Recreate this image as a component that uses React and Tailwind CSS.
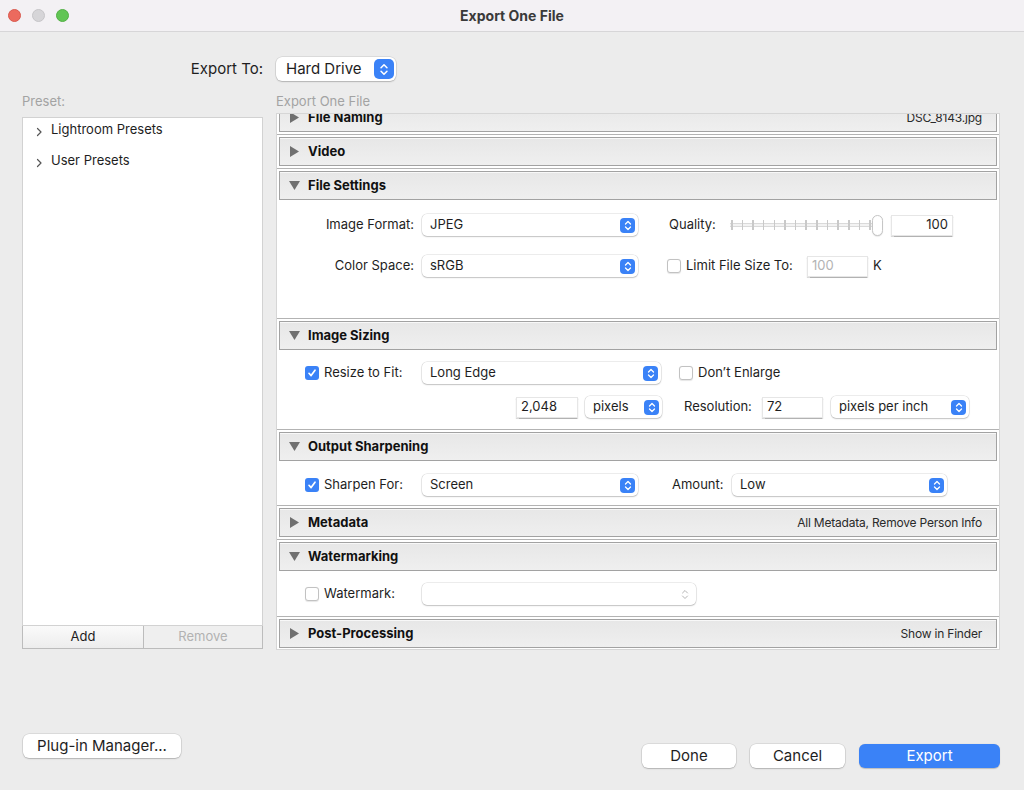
import React from 'react';

function Stepper({ big }) {
    return (
        <div className={big ? "w-[20px] h-[20px] rounded-[5px] bg-[#3a82f7] flex items-center justify-center" : "w-[15px] h-[15px] rounded-[4px] bg-[#3a82f7] flex items-center justify-center"}>
            <svg width={big ? 10 : 8} height={big ? 13 : 11} viewBox="0 0 8 11">
                <path d="M1.5 4 L4 1.5 L6.5 4 M1.5 7 L4 9.5 L6.5 7" stroke="white" strokeWidth="1.3" fill="none" strokeLinecap="round" strokeLinejoin="round" />
            </svg>
        </div>
    );
}

function Select({ className, value, disabled }) {
    return (
        <div className={`flex items-center h-[22px] rounded-[5px] bg-white shadow-[0_0_0_0.5px_rgba(0,0,0,0.14),0_1px_1.5px_rgba(0,0,0,0.18)] pl-[8px] pr-[3px] ${className}`}>
            <span className="flex-1 text-[13px] text-[#1e1e1e] truncate">{value}</span>
            {disabled ? (
                <svg width="8" height="11" viewBox="0 0 8 11" className="mr-[4px]">
                    <path d="M1.5 4 L4 1.5 L6.5 4 M1.5 7 L4 9.5 L6.5 7" stroke="#b5b5b5" strokeWidth="1" fill="none" strokeLinecap="round" strokeLinejoin="round" />
                </svg>
            ) : (
                <Stepper />
            )}
        </div>
    );
}

function Checkbox({ checked }) {
    if (checked) {
        return (
            <div className="w-[14px] h-[14px] rounded-[3px] bg-[#3a82f7] flex items-center justify-center shrink-0">
                <svg width="10" height="10" viewBox="0 0 10 10">
                    <path d="M2 5.3 L4.1 7.6 L8 2.2" stroke="white" strokeWidth="1.7" fill="none" strokeLinecap="round" strokeLinejoin="round" />
                </svg>
            </div>
        );
    }
    return <div className="w-[14px] h-[14px] rounded-[3px] bg-white border border-[#c2c2c2] shadow-[0_0.5px_1px_rgba(0,0,0,0.1)] shrink-0" />;
}

function TextBox({ className, value, muted, right }) {
    return (
        <div className={`h-[21px] flex items-center bg-white border border-[#e6e6e6] shadow-[0_0.5px_1px_rgba(0,0,0,0.3)] px-[4px] text-[13px] ${right ? 'justify-end' : ''} ${muted ? 'text-[#b3b3b3]' : 'text-[#1e1e1e]'} ${className}`}>
            {value}
        </div>
    );
}

function Triangle({ open }) {
    return open ? (
        <svg width="11" height="11" viewBox="0 0 11 11"><polygon points="0,1 11,1 5.5,10" fill="#707070" /></svg>
    ) : (
        <svg width="11" height="11" viewBox="0 0 11 11"><polygon points="1,0 10,5.5 1,11" fill="#707070" /></svg>
    );
}

function Section({ title, right, open, children, contentClass }) {
    return (
        <div className="px-[2px] pt-[2px] pb-[2px] border-b border-[#b3b3b3]">
            <div className="h-[29px] border border-[#a2a2a2] bg-linear-to-b from-[#e7e7e7] to-[#efefef] shadow-[inset_0_1px_0_#f8f8f8] flex items-center pl-[9px] pr-[14px]">
                <Triangle open={open} />
                <span className="ml-[8px] font-bold text-[13px] text-[#111]">{title}</span>
                {right && <span className="ml-auto text-[12px] text-[#2a2a2a] tracking-[-0.2px]">{right}</span>}
            </div>
            {children && <div className={contentClass}>{children}</div>}
        </div>
    );
}

function Label({ children }) {
    return <div className="w-[143px] flex justify-end pr-[8px] text-[13px] text-[#1e1e1e]">{children}</div>;
}

function CheckLabel({ checked, children }) {
    return (
        <div className="w-[143px] flex items-center gap-[5px] pl-[26px] text-[13px] text-[#1e1e1e]">
            <Checkbox checked={checked} />
            <span>{children}</span>
        </div>
    );
}

function Slider() {
    const ticks = Array.from({ length: 14 });
    return (
        <div className="relative w-[155px] h-[22px]">
            <div className="absolute left-[2px] right-[8px] top-[9px] h-[4px] border-y border-[#dadada] bg-[#f3f3f3]" />
            <div className="absolute left-[3px] right-[12px] top-[6px] h-[10px] flex justify-between">
                {ticks.map((_, i) => (
                    <div key={i} className="w-[1.5px] h-[10px] bg-[#c9c9c9]" />
                ))}
            </div>
            <div className="absolute right-0 top-[1px] w-[11px] h-[21px] rounded-full bg-white border border-[#c6c6c6] shadow-[0_0.5px_1px_rgba(0,0,0,0.15)]" />
        </div>
    );
}

function Button({ className, children, primary }) {
    return (
        <div className={`h-[24px] rounded-[6px] flex items-center justify-center text-[15px] ${primary ? 'bg-[#3a82f7] text-white shadow-[0_0.5px_1px_rgba(0,0,0,0.2)]' : 'bg-white text-[#1e1e1e] shadow-[0_0_0_0.5px_rgba(0,0,0,0.14),0_1px_1.5px_rgba(0,0,0,0.18)]'} ${className}`}>
            {children}
        </div>
    );
}

export default function App() {
    return (
        <div className="w-[1024px] h-[790px] bg-[#ececec] flex flex-col font-['Inter','Noto_Sans',sans-serif] text-[#1e1e1e] overflow-hidden">
            {/* title bar */}
            <div className="h-[32px] shrink-0 bg-[#f3f1f4] border-b border-[#d7d6d8] grid grid-cols-[1fr_auto_1fr] items-center">
                <div className="flex items-center gap-[11px] pl-[8px]">
                    <div className="w-[13px] h-[13px] rounded-full bg-[#ec6a5e] border border-[#d9594e]" />
                    <div className="w-[13px] h-[13px] rounded-full bg-[#d6d5d8] border border-[#c6c5c8]" />
                    <div className="w-[13px] h-[13px] rounded-full bg-[#61c554] border border-[#52b045]" />
                </div>
                <div className="text-[14px] font-bold text-[#3a3a3a] -mt-[1px]">Export One File</div>
                <div />
            </div>

            {/* export to */}
            <div className="flex items-center mt-[25px] h-[24px]">
                <div className="w-[263px] text-right text-[15px]">Export To:</div>
                <div className="ml-[13px] w-[120px] h-[24px] rounded-[6px] bg-white shadow-[0_0_0_0.5px_rgba(0,0,0,0.14),0_1px_1.5px_rgba(0,0,0,0.18)] flex items-center pl-[10px] pr-[2px]">
                    <span className="flex-1 text-[15px]">Hard Drive</span>
                    <Stepper big />
                </div>
            </div>

            {/* main */}
            <div className="flex items-start mt-[12px] pl-[22px] gap-[13px]">
                <div className="w-[241px] flex flex-col">
                    <div className="h-[24px] text-[13px] leading-[17px] text-[#a3a3a3]">Preset:</div>
                    <div className="h-[509px] bg-white border border-[#d2d2d2] flex flex-col gap-[7px]">
                        {['Lightroom Presets', 'User Presets'].map(p => (
                            <div key={p} className="h-[24px] flex items-center pl-[13px] text-[13px]">
                                <svg width="7" height="10" viewBox="0 0 7 10" className="mt-[3px]">
                                    <path d="M1.5 1.5 L5 5 L1.5 8.5" stroke="#555" strokeWidth="1.2" fill="none" strokeLinecap="round" strokeLinejoin="round" />
                                </svg>
                                <span className="ml-[8px]">{p}</span>
                            </div>
                        ))}
                    </div>
                    <div className="h-[23px] flex border border-t-0 border-[#bcbcbc] text-[13px]">
                        <div className="w-[121px] border-r border-[#bcbcbc] bg-linear-to-b from-[#fafafa] to-[#ededed] flex items-center justify-center">Add</div>
                        <div className="flex-1 bg-[#efefef] text-[#b2b2b2] flex items-center justify-center">Remove</div>
                    </div>
                </div>

                <div className="w-[724px] flex flex-col">
                    <div className="h-[20px] text-[13px] leading-[17px] text-[#a3a3a3]">Export One File</div>
                    <div className="h-[537px] bg-white border border-[#d6d6d6] overflow-hidden">
                        <div className="-mt-[13px]">
                            <Section title="File Naming" right="DSC_8143.jpg" />
                            <Section title="Video" />
                            <Section title="File Settings" open contentClass="h-[116px] pt-[14px] flex flex-col gap-[19px]">
                                <div className="flex items-center h-[22px]">
                                    <Label>Image Format:</Label>
                                    <Select className="w-[216px]" value="JPEG" />
                                    <div className="ml-[31px] w-[59px] text-[13px]">Quality:</div>
                                    <Slider />
                                    <TextBox className="ml-[8px] w-[62px]" value="100" right />
                                </div>
                                <div className="flex items-center h-[22px]">
                                    <Label>Color Space:</Label>
                                    <Select className="w-[216px]" value="sRGB" />
                                    <div className="ml-[29px]"><Checkbox /></div>
                                    <div className="ml-[5px] w-[121px] text-[13px]">Limit File Size To:</div>
                                    <TextBox className="w-[61px]" value="100" muted />
                                    <div className="ml-[5px] text-[13px]">K</div>
                                </div>
                            </Section>
                            <Section title="Image Sizing" open contentClass="h-[77px] pt-[12px] flex flex-col gap-[12px]">
                                <div className="flex items-center h-[22px]">
                                    <CheckLabel checked>Resize to Fit:</CheckLabel>
                                    <Select className="w-[239px]" value="Long Edge" />
                                    <div className="ml-[18px]"><Checkbox /></div>
                                    <div className="ml-[5px] text-[13px]">Don’t Enlarge</div>
                                </div>
                                <div className="flex items-center h-[22px]">
                                    <TextBox className="ml-[237px] w-[62px]" value="2,048" />
                                    <Select className="ml-[7px] w-[77px]" value="pixels" />
                                    <div className="ml-[22px] w-[78px] text-[13px]">Resolution:</div>
                                    <TextBox className="w-[61px]" value="72" />
                                    <Select className="ml-[8px] w-[138px]" value="pixels per inch" />
                                </div>
                            </Section>
                            <Section title="Output Sharpening" open contentClass="h-[42px] pt-[13px]">
                                <div className="flex items-center h-[22px]">
                                    <CheckLabel checked>Sharpen For:</CheckLabel>
                                    <Select className="w-[216px]" value="Screen" />
                                    <div className="ml-[34px] w-[60px] text-[13px]">Amount:</div>
                                    <Select className="w-[215px]" value="Low" />
                                </div>
                            </Section>
                            <Section title="Metadata" right="All Metadata, Remove Person Info" />
                            <Section title="Watermarking" open contentClass="h-[43px] pt-[12px]">
                                <div className="flex items-center h-[22px]">
                                    <CheckLabel>Watermark:</CheckLabel>
                                    <Select className="w-[274px]" value="" disabled />
                                </div>
                            </Section>
                            <Section title="Post-Processing" right="Show in Finder" />
                        </div>
                    </div>
                </div>
            </div>

            {/* bottom buttons */}
            <div className="flex items-start justify-between mt-[84px] pl-[23px] pr-[24px]">
                <Button className="w-[158px]">Plug-in Manager...</Button>
                <div className="flex gap-[14px] mt-[10px]">
                    <Button className="w-[94px]">Done</Button>
                    <Button className="w-[95px]">Cancel</Button>
                    <Button className="w-[141px]" primary>Export</Button>
                </div>
            </div>
        </div>
    );
}
